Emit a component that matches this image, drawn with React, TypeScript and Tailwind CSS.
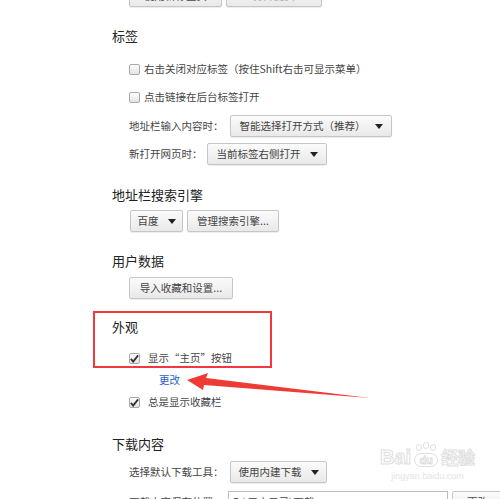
import React from 'react';

const font = "font-['Noto_Sans_CJK_SC','Noto_Sans',sans-serif]";

const Btn: React.FC<{ w: string; children?: React.ReactNode; arrow?: boolean }> = ({ w, children, arrow }) => (
  <div
    className={`${w} h-[22px] shrink-0 flex items-center justify-center gap-[9px] rounded-[2px] border border-[#c6c6c6] bg-gradient-to-b from-[#fbfbfb] to-[#e9e9e9] shadow-[0_1px_1px_rgba(0,0,0,0.08)] text-[10.5px] text-[#444] whitespace-nowrap`}
  >
    <span>{children}</span>
    {arrow && (
      <svg width="8" height="5" viewBox="0 0 8 5">
        <path d="M0 0h8L4 5z" fill="#222" />
      </svg>
    )}
  </div>
);

const Check: React.FC<{ checked?: boolean }> = ({ checked }) => (
  <div className="w-[11px] h-[11px] shrink-0 rounded-[2px] border border-[#a9a9a9] bg-gradient-to-b from-[#fdfdfd] to-[#e4e4e4] flex items-center justify-center">
    {checked && (
      <svg width="10" height="9" viewBox="0 0 10 9">
        <path d="M1 5l2.5 3L9 1" stroke="#333" strokeWidth="2" fill="none" />
      </svg>
    )}
  </div>
);

const Heading: React.FC<{ mt: string; children: React.ReactNode }> = ({ mt, children }) => (
  <div className={`${mt} h-[20px] leading-[20px] text-[13px] text-[#222]`}>{children}</div>
);

const App: React.FC = () => {
  return (
    <div className={`relative w-[500px] h-[499px] overflow-hidden bg-white ${font}`}>
      <div className="pl-[112px]">
        {/* cut-off buttons from the section above */}
        <div className="-mt-[15px] ml-[17px] h-[22px] flex items-center gap-[4px]">
          <Btn w="w-[93px]">使用新标签页</Btn>
          <Btn w="w-[96px]">
            <span className="text-[#aaa]">打开此页</span>
          </Btn>
          <span className="ml-[11px] -mt-[16px] text-[10.5px] text-[#aaa]">www.hao123.com</span>
        </div>

        <Heading mt="mt-[19px]">标签</Heading>
        <div className="mt-[13px] ml-[17px] h-[20px] flex items-center gap-[4px] text-[10.5px] text-[#444]">
          <Check />
          <span>右击关闭对应标签（按住Shift右击可显示菜单）</span>
        </div>
        <div className="mt-[8px] ml-[17px] h-[20px] flex items-center gap-[4px] text-[10.5px] text-[#444]">
          <Check />
          <span>点击链接在后台标签打开</span>
        </div>
        <div className="mt-[8px] ml-[17px] h-[22px] flex items-center text-[10.5px] text-[#444]">
          <span className="w-[101px] shrink-0">地址栏输入内容时：</span>
          <Btn w="w-[162px]" arrow>智能选择打开方式（推荐）</Btn>
        </div>
        <div className="mt-[6px] ml-[17px] h-[22px] flex items-center text-[10.5px] text-[#444]">
          <span className="w-[78px] shrink-0">新打开网页时：</span>
          <Btn w="w-[120px]" arrow>当前标签右侧打开</Btn>
        </div>

        <Heading mt="mt-[20px]">地址栏搜索引擎</Heading>
        <div className="mt-[5px] ml-[18px] h-[22px] flex items-center gap-[4px]">
          <Btn w="w-[53px]" arrow>百度</Btn>
          <Btn w="w-[92px]">管理搜索引擎...</Btn>
        </div>

        <Heading mt="mt-[19px]">用户数据</Heading>
        <div className="mt-[6px] ml-[17px] flex">
          <Btn w="w-[104px]">导入收藏和设置...</Btn>
        </div>

        {/* highlighted section */}
        <div className="mt-[12px] -ml-[19px] w-[179px] h-[57px] border-2 border-[#f2383c] pl-[17px]">
          <Heading mt="mt-[4px]">外观</Heading>
          <div className="mt-[13px] ml-[17px] h-[16px] flex items-center gap-[8px] text-[10.5px] text-[#444]">
            <Check checked />
            <span>显示“主页”按钮</span>
          </div>
        </div>
        <div className="mt-[4px] ml-[47px] h-[16px] leading-[16px] text-[10.5px] text-[#2a62c9]">更改</div>
        <div className="mt-[6px] ml-[17px] h-[16px] flex items-center gap-[8px] text-[10.5px] text-[#444]">
          <Check checked />
          <span>总是显示收藏栏</span>
        </div>

        <Heading mt="mt-[24px]">下载内容</Heading>
        <div className="mt-[7px] ml-[17px] h-[22px] flex items-center text-[10.5px] text-[#444]">
          <span className="w-[101px] shrink-0">选择默认下载工具：</span>
          <Btn w="w-[97px]" arrow>使用内建下载</Btn>
        </div>
        <div className="mt-[8px] ml-[17px] h-[22px] flex items-center text-[10.5px] text-[#444]">
          <span className="w-[99px] shrink-0">下载内容保存位置：</span>
          <div className="w-[220px] h-[22px] shrink-0 border border-[#bdbdbd] bg-white px-[4px] leading-[20px]">D:\用户目录\下载</div>
          <div className="ml-[4px]">
            <Btn w="w-[60px]">更改...</Btn>
          </div>
        </div>
      </div>

      {/* annotation arrow */}
      <svg className="absolute left-0 top-0" width="500" height="499" viewBox="0 0 500 499">
        <polygon points="187,380 208,373 206,378 370,398 204,385 203,390" fill="#ee3b36" />
      </svg>

      {/* watermark */}
      <div className="absolute left-[380px] top-[444px] flex flex-col items-center opacity-90 pointer-events-none">
        <div className="flex items-end gap-[2px]">
          <span className="text-[20px] leading-[22px] font-bold font-['Liberation_Sans',sans-serif] text-white [-webkit-text-stroke:1px_#dcdcdc]">Bai</span>
          <div className="relative w-[26px] h-[24px]">
            <div className="absolute left-[3px] top-[0px] w-[6px] h-[7px] rounded-full border border-[#dcdcdc]" />
            <div className="absolute left-[10px] top-[-2px] w-[6px] h-[7px] rounded-full border border-[#dcdcdc]" />
            <div className="absolute left-[17px] top-[0px] w-[6px] h-[7px] rounded-full border border-[#dcdcdc]" />
            <div className="absolute left-[1px] top-[9px] w-[24px] h-[14px] rounded-[7px] border border-[#dcdcdc] flex items-center justify-center text-[11px] font-bold text-white [-webkit-text-stroke:0.8px_#d6d6d6] font-['Liberation_Sans',sans-serif]">du</div>
          </div>
          <span className="text-[17px] leading-[22px] font-bold text-white [-webkit-text-stroke:1px_#dcdcdc]">经验</span>
        </div>
        <span className="mt-[3px] text-[9px] leading-[10px] text-[#e2e2e2] font-['Liberation_Sans',sans-serif]">jingyan.baidu.com</span>
      </div>
    </div>
  );
};

export default App;
